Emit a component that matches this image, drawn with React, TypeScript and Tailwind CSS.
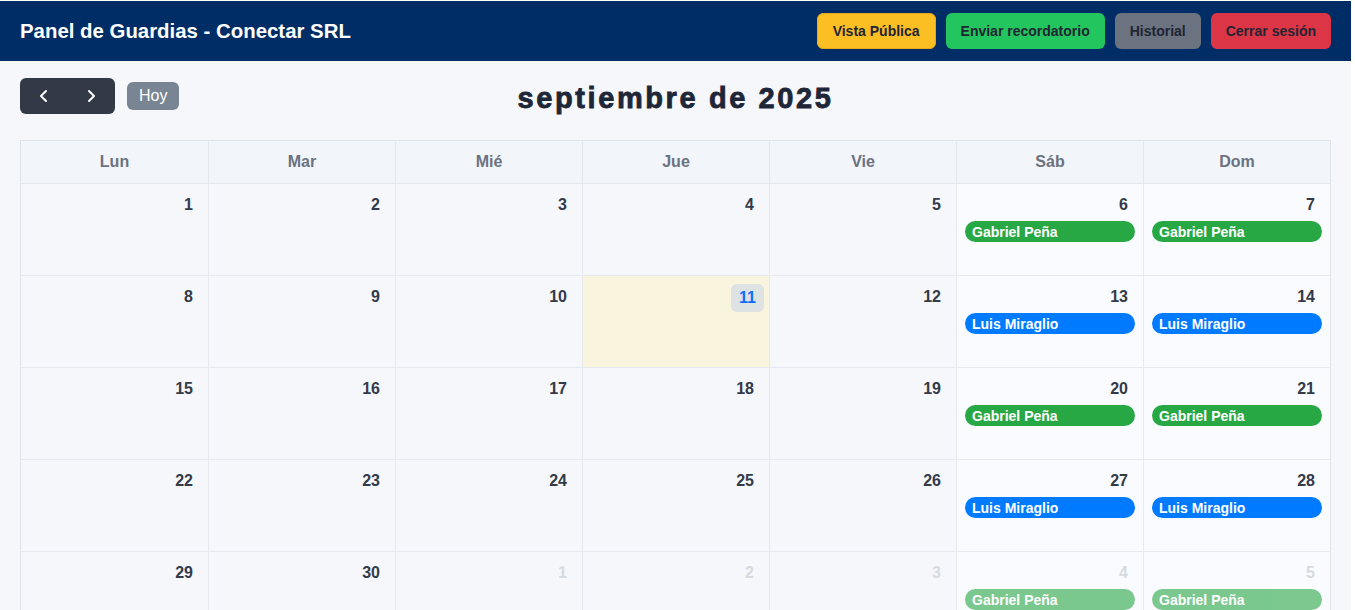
import React from 'react';

type Guard = { name: string; color: 'green' | 'blue' };

interface DayCell {
    day: number;
    outside?: boolean;
    today?: boolean;
    guard?: Guard;
}

const gabriel: Guard = { name: 'Gabriel Peña', color: 'green' };
const luis: Guard = { name: 'Luis Miraglio', color: 'blue' };

const weekDays = ['Lun', 'Mar', 'Mié', 'Jue', 'Vie', 'Sáb', 'Dom'];

const buildWeeks = (): DayCell[][] => {
    const weeks: DayCell[][] = [];
    const guardFor = (weekIndex: number) => (weekIndex % 2 === 0 ? gabriel : luis);
    // septiembre 2025 empieza en lunes
    let day = 1;
    for (let w = 0; w < 5; w++) {
        const week: DayCell[] = [];
        for (let d = 0; d < 7; d++) {
            const outside = day > 30;
            const num = outside ? day - 30 : day;
            const cell: DayCell = { day: num, outside, today: !outside && num === 11 };
            if (d >= 5) cell.guard = guardFor(w);
            week.push(cell);
            day++;
        }
        weeks.push(week);
    }
    return weeks;
};

const GuardPill: React.FC<{ guard: Guard; faded?: boolean }> = ({ guard, faded }) => (
    <div
        className={`mx-2 mt-[5px] h-[21px] rounded-full flex items-center px-[7px] text-white text-[14px] font-bold leading-none ${
            guard.color === 'green' ? 'bg-[#28a745]' : 'bg-[#007bff]'
        } ${faded ? 'opacity-60' : ''}`}
    >
        {guard.name}
    </div>
);

const Header: React.FC = () => (
    <header className="mt-px h-[60px] bg-[#002d66] flex items-center justify-between pl-5 pr-5">
        <h1 className="text-white text-[20.4px] font-bold">Panel de Guardias - Conectar SRL</h1>
        <div className="flex items-center gap-[10px]">
            <button className="h-[36px] px-[15px] rounded-md bg-[#fbbf24] border border-[#e8a916] text-[#1f2533] text-[14px] font-bold">
                Vista Pública
            </button>
            <button className="h-[36px] px-[15px] rounded-md bg-[#22c55e] text-[#1f2533] text-[14px] font-bold">
                Enviar recordatorio
            </button>
            <button className="h-[36px] px-[15px] rounded-md bg-[#6b7280] text-[#1f2533] text-[14px] font-bold">
                Historial
            </button>
            <button className="h-[36px] px-[15px] rounded-md bg-[#dc3545] text-[#1f2533] text-[14px] font-bold">
                Cerrar sesión
            </button>
        </div>
    </header>
);

const App: React.FC = () => {
    const weeks = buildWeeks();

    return (
        <div className="w-[1351px] min-h-[610px] bg-[#f5f7fb] font-['Liberation_Sans',Arial,sans-serif]">
            <Header />
            <div className="px-5 pt-[17px]">
                <div className="relative flex items-center h-[36px]">
                    <div className="flex h-[36px] w-[95px] rounded-md bg-[#323947] text-white">
                        <button className="flex-1 flex items-center justify-center">
                            <svg width="14" height="14" viewBox="0 0 14 14" fill="none" stroke="currentColor" strokeWidth="2" strokeLinecap="round" strokeLinejoin="round">
                                <path d="M9 2 L4 7 L9 12" />
                            </svg>
                        </button>
                        <button className="flex-1 flex items-center justify-center">
                            <svg width="14" height="14" viewBox="0 0 14 14" fill="none" stroke="currentColor" strokeWidth="2" strokeLinecap="round" strokeLinejoin="round">
                                <path d="M5 2 L10 7 L5 12" />
                            </svg>
                        </button>
                    </div>
                    <button className="ml-3 h-[28px] px-[12px] rounded-md bg-[#7a8594] text-white text-[16px]">Hoy</button>
                    <h2 className="absolute left-0 right-0 -top-[1px] text-center pointer-events-none text-[29px] font-bold text-[#1e2637] tracking-[2.6px] [-webkit-text-stroke:0.8px_#1e2637]">
                        septiembre de 2025
                    </h2>
                </div>

                <div className="mt-[26px] w-[1311px] border border-[#dfe3ea] grid grid-cols-[188px_repeat(5,187px)_1fr]">
                    {weekDays.map((d, i) => (
                        <div
                            key={d}
                            className={`h-[43px] flex items-center justify-center bg-[#f2f5f9] text-[#6b7280] text-[16px] font-bold border-b border-[#e3e7ee] ${
                                i < 6 ? 'border-r' : ''
                            }`}
                        >
                            {d}
                        </div>
                    ))}
                    {weeks.map((week, w) =>
                        week.map((cell, i) => (
                            <div
                                key={`${w}-${i}`}
                                className={`h-[92px] border-[#e6eaf0] ${i < 6 ? 'border-r' : ''} ${w < 4 ? 'border-b' : ''} ${
                                    cell.today ? 'bg-[#f8f4de]' : i >= 5 ? 'bg-[#fafbfe]' : 'bg-[#f5f7fb]'
                                }`}
                            >
                                <div className="flex justify-end pr-[15px] pt-[11px] h-[32px]">
                                    {cell.today ? (
                                        <span className="-mt-[3px] -mr-[10px] h-[28px] px-[8px] rounded-md bg-[#dde2e2] text-[#0d6efd] text-[16px] font-bold flex items-center">
                                            {cell.day}
                                        </span>
                                    ) : (
                                        <span
                                            className={`text-[16px] font-bold leading-[20px] ${
                                                cell.outside ? 'text-[#d6dae0]' : 'text-[#333a48]'
                                            }`}
                                        >
                                            {cell.day}
                                        </span>
                                    )}
                                </div>
                                {cell.guard && <GuardPill guard={cell.guard} faded={cell.outside} />}
                            </div>
                        ))
                    )}
                </div>
            </div>
        </div>
    );
};

export default App;
